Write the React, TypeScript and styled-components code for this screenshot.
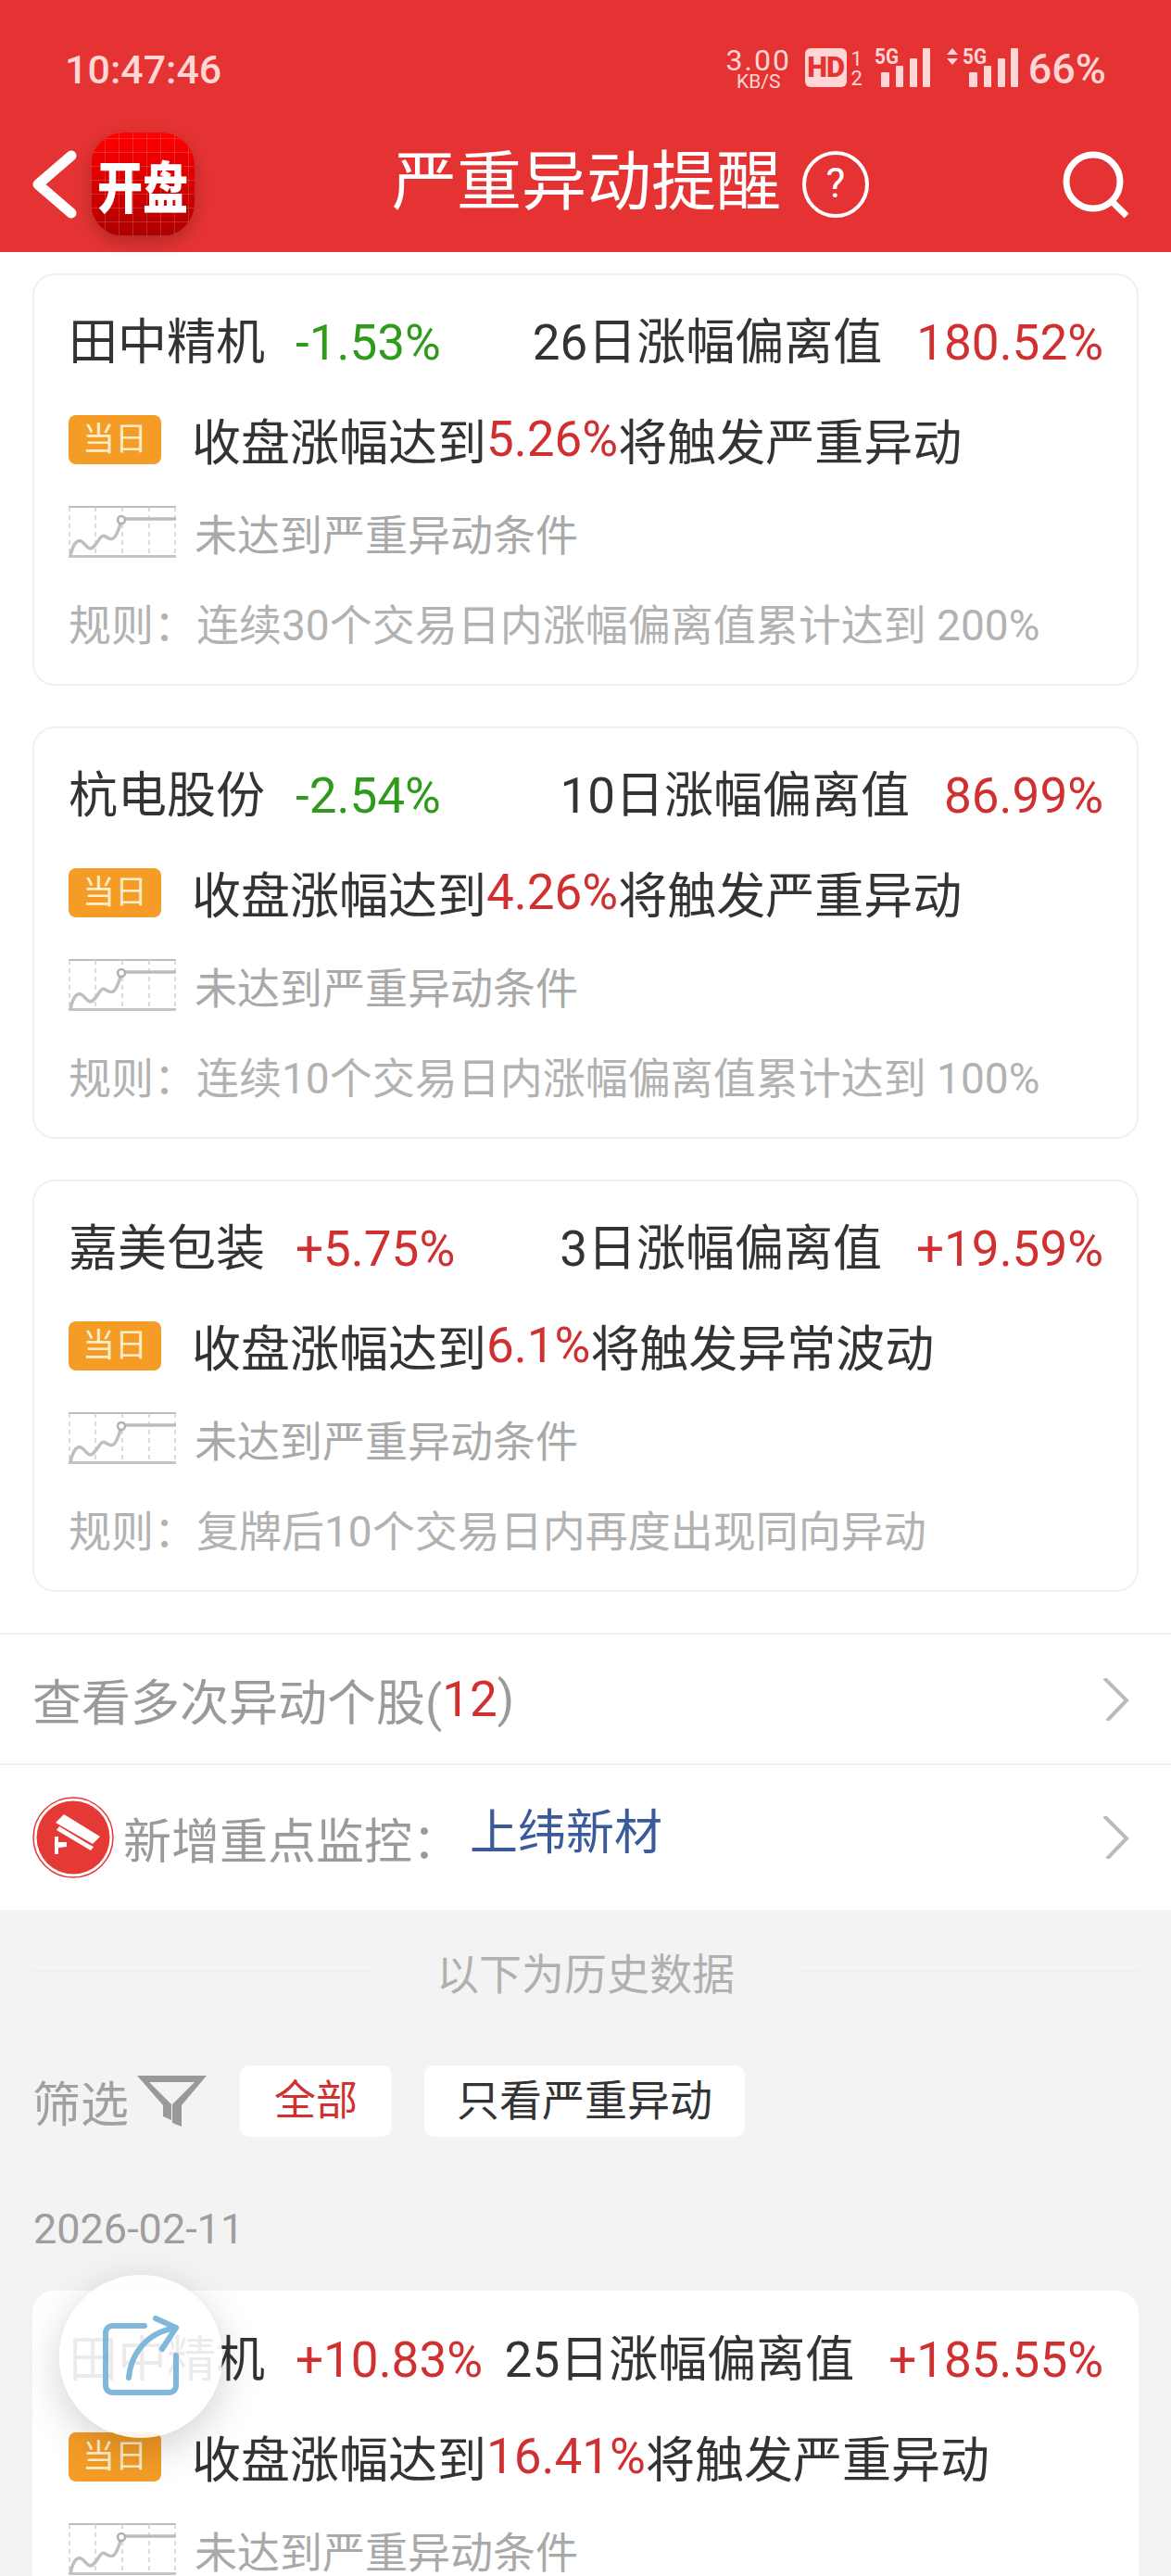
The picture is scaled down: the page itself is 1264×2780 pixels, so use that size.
import styled, { createGlobalStyle } from 'styled-components';

const GlobalStyle = createGlobalStyle`
  html, body {
    margin: 0;
    padding: 0;
    background: #fff;
    font-family: Roboto, "Noto Sans CJK SC", sans-serif;
  }
  * { box-sizing: border-box; }
`;

const Page = styled.div`
  position: relative;
  width: 1264px;
  height: 2780px;
  overflow: hidden;
  background: #f3f3f3;
`;

const Header = styled.header`
  height: 272px;
  background: #e53333;
`;

const StatusBar = styled.div`
  height: 137px;
  display: flex;
  align-items: flex-start;
  padding: 52px 70px 0 70px;
  color: #ffd5d5;
`;

const Clock = styled.span`
  font-size: 43px;
  font-weight: 500;
  line-height: 46px;
  margin-right: auto;
`;

const Speed = styled.div`
  width: 70px;
  display: flex;
  flex-direction: column;
  align-items: center;
  margin-right: 15px;
`;

const SpeedValue = styled.span`
  font-size: 32px;
  letter-spacing: 2px;
  line-height: 27px;
`;

const SpeedUnit = styled.span`
  font-size: 21px;
  line-height: 18px;
`;

const HdBadge = styled.span`
  width: 45px;
  height: 42px;
  border-radius: 6px;
  background: #ffd5d5;
  color: #e53333;
  font-size: 31px;
  font-weight: 900;
  line-height: 42px;
  text-align: center;
  letter-spacing: -1px;
`;

const SimSlots = styled.div`
  width: 14px;
  margin: 2px 12px 0 4px;
  display: flex;
  flex-direction: column;
  gap: 1px;
  font-size: 22px;
  line-height: 20px;
  text-align: center;
`;

const SignalIcon = styled.svg`
  display: block;
  margin: -6px 11px 0 0;
`;

const Battery = styled.span`
  font-size: 45px;
  font-weight: 500;
  line-height: 46px;
`;

const Nav = styled.nav`
  height: 135px;
  display: flex;
  align-items: center;
  padding: 0 45px 12px 35px;
  color: #fff;
`;

const BackIcon = styled.svg`
  display: block;
  flex: none;
`;

const Logo = styled.div`
  width: 112px;
  height: 112px;
  margin-left: 15px;
  flex: none;
  display: flex;
  align-items: center;
  justify-content: center;
  border-radius: 36px;
  color: #fff;
  font-size: 49px;
  font-weight: 900;
  box-shadow: 0 6px 18px rgba(0, 0, 0, 0.22);
  background:
    repeating-linear-gradient(90deg, rgba(255, 255, 255, 0.16) 0 1px, transparent 1px 15px),
    repeating-linear-gradient(0deg, rgba(255, 255, 255, 0.16) 0 1px, transparent 1px 15px),
    linear-gradient(180deg, #ff0000 0%, #ad0000 100%);
`;

const LogoText = styled.span`
  display: block;
  transform: scaleY(1.22);
`;

const Title = styled.h1`
  margin: -4px 0 0 213px;
  font-size: 70px;
  font-weight: 400;
  line-height: 80px;
  white-space: nowrap;
`;

const HelpBadge = styled.span`
  width: 72px;
  height: 72px;
  margin-left: 23px;
  flex: none;
  border: 4px solid #fff;
  border-radius: 50%;
  font-size: 44px;
  line-height: 62px;
  text-align: center;
`;

const SearchIcon = styled.svg`
  display: block;
  margin-left: auto;
  flex: none;
`;

const LiveSection = styled.section`
  background: #fff;
  padding-top: 23px;
`;

const CardList = styled.div`
  display: flex;
  flex-direction: column;
  gap: 44px;
  padding: 0 35px;
`;

const Card = styled.article<{ $flat?: boolean }>`
  height: 445px;
  flex: none;
  padding: ${p => (p.$flat ? '45px 38px 0 39px' : '43px 36px 0 37px')};
  background: #fff;
  border: ${p => (p.$flat ? 'none' : '2px solid #f0f0f0')};
  border-radius: 24px;
`;

const HeadRow = styled.div`
  display: flex;
  align-items: baseline;
  height: 60px;
  font-size: 53px;
  line-height: 60px;
  color: #333;
  white-space: nowrap;
`;

const StockName = styled.span`
  width: 245px;
  flex: none;
`;

const Tone = styled.span<{ $tone: 'up' | 'down' }>`
  color: ${p => (p.$tone === 'up' ? '#d03030' : '#2f9a1c')};
`;

const Deviation = styled.div`
  margin-left: auto;
  display: flex;
  align-items: baseline;
  gap: 37px;
`;

const TriggerRow = styled.div`
  display: flex;
  align-items: center;
  height: 60px;
  margin-top: 44px;
  font-size: 53px;
  color: #333;
  white-space: nowrap;
`;

const DayBadge = styled.span`
  width: 100px;
  height: 53px;
  margin-right: 33px;
  flex: none;
  border-radius: 8px;
  background: #f49c26;
  color: #fdecc8;
  font-size: 35px;
  line-height: 53px;
  text-align: center;
`;

const StatusRow = styled.div`
  display: flex;
  align-items: center;
  gap: 20px;
  height: 56px;
  margin-top: 42px;
  font-size: 46px;
  color: #a9a9a9;
  white-space: nowrap;
`;

const RuleRow = styled.div`
  height: 56px;
  margin-top: 45px;
  font-size: 46px;
  line-height: 56px;
  color: #b2b2b2;
  white-space: nowrap;
`;

const LinkRow = styled.div<{ $height: number; $size: number }>`
  height: ${p => p.$height}px;
  display: flex;
  align-items: center;
  padding: 0 44px 0 35px;
  border-top: 2px solid #efefef;
  font-size: ${p => p.$size}px;
  color: #9a9a9a;
  white-space: nowrap;
`;

const LinkRows = styled.div`
  margin-top: 44px;
`;

const Chevron = styled.svg`
  display: block;
  margin-left: auto;
  flex: none;
`;

const CameraIcon = styled.svg`
  display: block;
  margin-right: 10px;
  flex: none;
`;

const WatchName = styled.span`
  margin: -20px 0 0 10px;
  color: #3a5a9a;
`;

const HistorySection = styled.section`
  padding-top: 36px;
`;

const DividerRow = styled.div`
  display: flex;
  align-items: center;
  gap: 72px;
  height: 60px;
  padding: 0 35px;
  font-size: 46px;
  color: #b0b0b0;
  white-space: nowrap;

  &::before,
  &::after {
    content: '';
    flex: 1;
    height: 2px;
    background: #eeeeee;
  }
`;

const FilterRow = styled.div`
  display: flex;
  align-items: center;
  height: 77px;
  margin-top: 72px;
  padding-left: 35px;
`;

const FilterLabel = styled.span`
  margin: 0 9px 0 0;
  font-size: 52px;
  color: #a0a0a0;
`;

const FilterIcon = styled.svg`
  display: block;
  margin-right: 36px;
  flex: none;
`;

const FilterChip = styled.span<{ $active?: boolean }>`
  height: 77px;
  margin-right: 35px;
  padding: 0 ${p => (p.$active ? 37 : 35)}px;
  border-radius: 10px;
  background: #fff;
  color: ${p => (p.$active ? '#d03030' : '#333')};
  font-size: ${p => (p.$active ? 45 : 46)}px;
  line-height: 77px;
  white-space: nowrap;
`;

const DateLabel = styled.div`
  margin: 72px 0 0 36px;
  height: 56px;
  font-size: 45px;
  line-height: 56px;
  color: #9e9e9e;
`;

const HistoryCards = styled.div`
  margin-top: 38px;
`;

const ShareButton = styled.button`
  position: absolute;
  left: 64px;
  top: 2455px;
  width: 176px;
  height: 176px;
  padding: 0;
  display: flex;
  align-items: center;
  justify-content: center;
  border: none;
  border-radius: 50%;
  background: rgba(255, 255, 255, 0.9);
  box-shadow: 0 12px 44px rgba(0, 0, 0, 0.18);
`;

type Alert = {
  name: string;
  change: string;
  changeTone: 'up' | 'down';
  label: string;
  value: string;
  target: string;
  outcome: string;
  rule: string;
};

const liveAlerts: Alert[] = [
  {
    name: '田中精机',
    change: '-1.53%',
    changeTone: 'down',
    label: '26日涨幅偏离值',
    value: '180.52%',
    target: '5.26%',
    outcome: '将触发严重异动',
    rule: '规则：连续30个交易日内涨幅偏离值累计达到 200%',
  },
  {
    name: '杭电股份',
    change: '-2.54%',
    changeTone: 'down',
    label: '10日涨幅偏离值',
    value: '86.99%',
    target: '4.26%',
    outcome: '将触发严重异动',
    rule: '规则：连续10个交易日内涨幅偏离值累计达到 100%',
  },
  {
    name: '嘉美包装',
    change: '+5.75%',
    changeTone: 'up',
    label: '3日涨幅偏离值',
    value: '+19.59%',
    target: '6.1%',
    outcome: '将触发异常波动',
    rule: '规则：复牌后10个交易日内再度出现同向异动',
  },
];

const historyAlert: Alert = {
  name: '田中精机',
  change: '+10.83%',
  changeTone: 'up',
  label: '25日涨幅偏离值',
  value: '+185.55%',
  target: '16.41%',
  outcome: '将触发严重异动',
  rule: '规则：连续30个交易日内涨幅偏离值累计达到 200%',
};

const Signal = ({ arrows }: { arrows?: boolean }) => (
  <SignalIcon width={arrows ? 84 : 60} height="50" viewBox={arrows ? '-24 -6 84 50' : '0 -6 60 50'}>
    {arrows && <path d="M-11 0l6 7h-12zM-11 18l6-7h-12z" fill="#ffd5d5" />}
    <text x="0" y="17" fontSize="24" fontWeight="700" fill="#ffd5d5" fontFamily="Roboto, sans-serif" textLength="26" lengthAdjust="spacingAndGlyphs">5G</text>
    <rect x="7" y="26" width="9" height="16" rx="1" fill="#ffd5d5" />
    <rect x="23" y="19" width="8" height="23" rx="1" fill="#ffd5d5" />
    <rect x="38" y="11" width="8" height="31" rx="1" fill="#ffd5d5" />
    <rect x="52" y="0" width="8" height="42" rx="1" fill="#ffd5d5" />
  </SignalIcon>
);

const TrendThumb = () => (
  <svg width="116" height="56" viewBox="0 0 116 56" style={{ display: 'block', flex: 'none' }}>
    <path d="M0 1H116" stroke="#bdbdbd" strokeWidth="2" />
    <path d="M1 1V54M29 1V54M58 1V54M87 1V54M115 1V54" stroke="#cfcfcf" strokeWidth="1.5" strokeDasharray="5 4" />
    <path d="M0 54.5H116" stroke="#c4c4c4" strokeWidth="3" />
    <path d="M61 14H116" stroke="#bcbcbc" strokeWidth="3.5" />
    <path d="M2 54C5 40 10 35 15 39S22 50 28 43 35 30 40 33 48 38 52 30 55 22 56 18" fill="none" stroke="#bfbfbf" strokeWidth="3.5" />
    <circle cx="57" cy="15" r="4" fill="#fff" stroke="#b0b0b0" strokeWidth="2.5" />
  </svg>
);

const AlertCard = ({ alert, flat }: { alert: Alert; flat?: boolean }) => (
  <Card $flat={flat}>
    <HeadRow>
      <StockName>{alert.name}</StockName>
      <Tone $tone={alert.changeTone}>{alert.change}</Tone>
      <Deviation>
        <span>{alert.label}</span>
        <Tone $tone="up">{alert.value}</Tone>
      </Deviation>
    </HeadRow>
    <TriggerRow>
      <DayBadge>当日</DayBadge>
      收盘涨幅达到<Tone $tone="up">{alert.target}</Tone>{alert.outcome}
    </TriggerRow>
    <StatusRow>
      <TrendThumb />
      未达到严重异动条件
    </StatusRow>
    <RuleRow>{alert.rule}</RuleRow>
  </Card>
);

const RowChevron = () => (
  <Chevron width="30" height="46" viewBox="0 0 30 46">
    <path d="M2 0L26 24L5 46" fill="none" stroke="#bbbbbb" strokeWidth="4" />
  </Chevron>
);

export default function App() {
  return (
    <Page>
      <GlobalStyle />
      <Header>
        <StatusBar>
          <Clock>10:47:46</Clock>
          <Speed>
            <SpeedValue>3.00</SpeedValue>
            <SpeedUnit>KB/S</SpeedUnit>
          </Speed>
          <HdBadge>HD</HdBadge>
          <SimSlots>
            <span>1</span>
            <span>2</span>
          </SimSlots>
          <Signal />
          <Signal arrows />
          <Battery>66%</Battery>
        </StatusBar>
        <Nav>
          <BackIcon width="48" height="74" viewBox="0 0 48 74">
            <path d="M42 6L6 37L42 68" fill="none" stroke="#fff" strokeWidth="11" strokeLinecap="round" strokeLinejoin="round" />
          </BackIcon>
          <Logo>
            <LogoText>开盘</LogoText>
          </Logo>
          <Title>严重异动提醒</Title>
          <HelpBadge>?</HelpBadge>
          <SearchIcon width="72" height="72" viewBox="0 0 72 72">
            <circle cx="33" cy="33" r="29" fill="none" stroke="#fff" strokeWidth="7" />
            <path d="M53 54L69 70" stroke="#fff" strokeWidth="7" />
          </SearchIcon>
        </Nav>
      </Header>

      <LiveSection>
        <CardList>
          {liveAlerts.map(alert => (
            <AlertCard key={alert.name} alert={alert} />
          ))}
        </CardList>
        <LinkRows>
          <LinkRow $height={141} $size={53}>
            查看多次异动个股(<Tone $tone="up">12</Tone>)
            <RowChevron />
          </LinkRow>
          <LinkRow $height={158} $size={52}>
            <CameraIcon width="88" height="88" viewBox="0 0 88 88">
              <circle cx="44" cy="44" r="43" fill="#fff" stroke="#e53935" strokeWidth="1.5" />
              <circle cx="44" cy="44" r="39.5" fill="#e53935" />
              <path d="M25 28L34 19L73 43L65 51Z" fill="#fff" />
              <path d="M26 36L63 58L66 54L62 52L29 32Z" fill="#fff" />
              <path d="M24 43H28V49H37V54L28 55V62H24Z" fill="#fff" />
            </CameraIcon>
            新增重点监控：
            <WatchName>上纬新材</WatchName>
            <RowChevron />
          </LinkRow>
        </LinkRows>
      </LiveSection>

      <HistorySection>
        <DividerRow>以下为历史数据</DividerRow>
        <FilterRow>
          <FilterLabel>筛选</FilterLabel>
          <FilterIcon width="75" height="55" viewBox="0 0 75 55">
            <path d="M0 0H75L48 32V55L38 51V31L62 7H13L37 31V48L28 44V32Z" fill="#999999" />
          </FilterIcon>
          <FilterChip $active>全部</FilterChip>
          <FilterChip>只看严重异动</FilterChip>
        </FilterRow>
        <DateLabel>2026-02-11</DateLabel>
        <HistoryCards>
          <CardList>
            <AlertCard alert={historyAlert} flat />
          </CardList>
        </HistoryCards>
      </HistorySection>

      <ShareButton aria-label="分享">
        <svg width="84" height="88" viewBox="0 0 84 88">
          <path d="M46 11H12C7 11 4 14 4 19V75C4 80 7 83 12 83H72C77 83 80 80 80 75V43" fill="none" stroke="#7fb8da" strokeWidth="6" strokeLinecap="round" />
          <path d="M29 67C31 42 48 18 80 13" fill="none" stroke="#7fb8da" strokeWidth="6" strokeLinecap="round" />
          <path d="M58 3L80 13L65 36" fill="none" stroke="#7fb8da" strokeWidth="6" strokeLinecap="round" strokeLinejoin="round" />
        </svg>
      </ShareButton>
    </Page>
  );
}
